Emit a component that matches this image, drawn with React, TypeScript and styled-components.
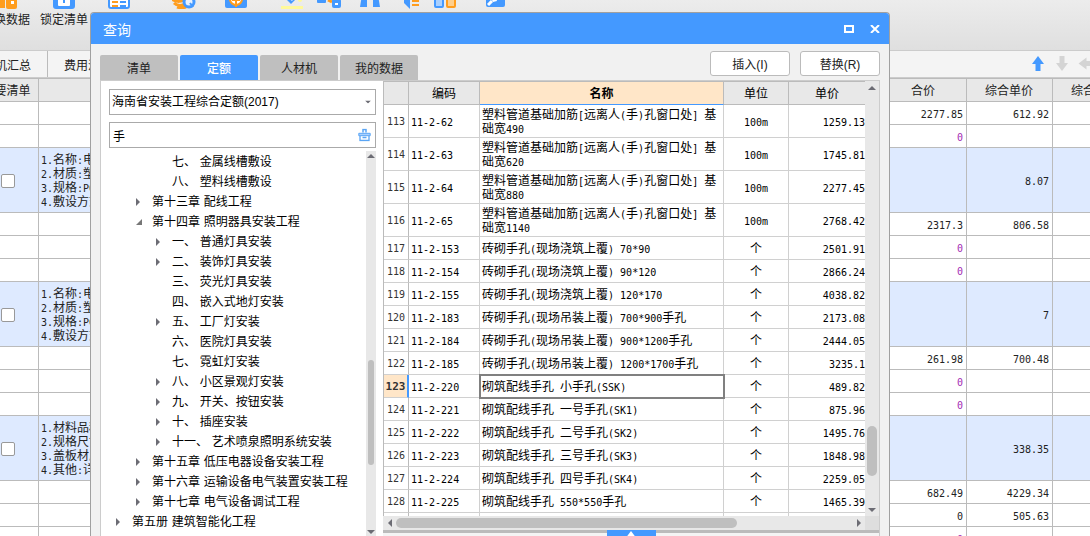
import React from "react";
import styled, { createGlobalStyle, css } from "styled-components";

const blue = "#4499ff";
const orange = "#ff9d1e";
const ui = `"Liberation Sans", "Noto Sans CJK SC", sans-serif`;
const cjk = `"Noto Sans CJK SC", sans-serif`;

const GlobalStyle = createGlobalStyle`
  *, *::before, *::after { box-sizing: border-box; }
  body { margin: 0; font-family: ${ui}; font-size: 12px; color: #222; overflow: hidden; }
  button, input, select { font: inherit; color: inherit; margin: 0; }
  svg { display: block; flex: none; }
`;

const Page = styled.div`
  position: relative;
  height: 100vh;
  overflow: hidden;
  background: #fff;
`;

/* ---------- main window ---------- */

const Ribbon = styled.div`
  height: 50px;
  overflow: hidden;
  background: linear-gradient(#ececec, #dfdfdf);
`;

const RibbonRow = styled.div`
  display: flex;
  margin: -15px 0 0 -18px;
`;

const RibbonButton = styled.button<{ $gap?: number }>`
  display: flex;
  flex: none;
  flex-direction: column;
  align-items: center;
  gap: 2px;
  padding: 0;
  margin-left: ${(p) => p.$gap ?? 0}px;
  border: 0;
  background: none;
  line-height: 18px;
  white-space: nowrap;
`;

const StripBar = styled.div`
  display: flex;
  justify-content: space-between;
  height: 28px;
  overflow: hidden;
  border-top: 1px solid #ccc;
  border-bottom: 1px solid #ccc;
  background: #f4f4f4;
`;

const StripTabs = styled.div`
  display: flex;
  margin-left: -45px;
`;

const StripTab = styled.button`
  padding: 0 16px;
  border: 0;
  border-right: 1px solid #bbb;
  background: none;
  white-space: nowrap;
`;

const StripTools = styled.div`
  display: flex;
  align-items: center;
  gap: 12px;
  margin-right: -2px;
`;

const IconButton = styled.button`
  display: flex;
  padding: 0;
  border: 0;
  background: none;
`;

const SheetWrap = styled.div`
  overflow: hidden;
`;

const Sheet = styled.table`
  width: calc(100% + 73px);
  margin-left: -24px;
  table-layout: fixed;
  border-collapse: separate;
  border-spacing: 0;
  border-top: 1px solid #bbb;
  font-family: ${cjk};
  line-height: 14px;

  th, td {
    height: 23px;
    padding: 0 3px 0 2px;
    border-right: 1px solid #bbb;
    border-bottom: 1px solid #bbb;
    overflow: hidden;
    font-weight: 400;
    white-space: nowrap;
  }
  th { background: #e8e8e8; text-align: center; }
`;

const SheetRow = styled.tr<{ $item?: boolean }>`
  ${(p) => p.$item && css`
    background: #deeaff;
    td { height: 65px; }
  `}
`;

const Num = styled.td<{ $zero?: boolean }>`
  text-align: right;
  color: ${(p) => (p.$zero ? "#a22bb3" : "inherit")};
`;

const CheckCell = styled.td`
  && { padding: 0 1px 0 3px; }
  text-align: center;
`;

const Check = styled.input`
  display: inline-block;
  width: 14px;
  height: 14px;
  appearance: none;
  border: 1px solid #999;
  border-radius: 2px;
  background: #fff;
  vertical-align: middle;
`;

const Latin = styled.span`
  font-family: "DejaVu Sans Mono", monospace;
  font-size: 10px;
  line-height: 0;
`;

/* ---------- query window ---------- */

const Dialog = styled.section`
  position: absolute;
  top: 12px;
  right: 200px;
  bottom: 0;
  left: 90px;
  display: flex;
  flex-direction: column;
  overflow: hidden;
  border: 1px solid #a0a0a0;
  border-bottom: 0;
  border-radius: 4px 4px 0 0;
  background: #f1f1f1;
`;

const TitleBar = styled.header`
  display: flex;
  flex: none;
  align-items: center;
  justify-content: space-between;
  height: 31px;
  padding: 0 9px 0 12px;
  background: ${blue};
  color: #fff;
`;

const Title = styled.h1`
  margin: 2px 0 0;
  font-size: 14px;
  font-weight: 400;
  line-height: 20px;
`;

const WindowButtons = styled.div`
  display: flex;
  gap: 16px;
`;

const Toolbar = styled.div`
  display: flex;
  flex: none;
  align-items: flex-end;
  justify-content: space-between;
  height: 36px;
  padding: 0 9px;
`;

const Tabs = styled.div`
  display: flex;
  gap: 2px;
`;

const Tab = styled.button<{ $active?: boolean }>`
  width: 78px;
  height: 25px;
  padding: 0;
  border: 0;
  border-radius: 2px 2px 0 0;
  background: ${(p) => (p.$active ? blue : "#bfbfbf")};
  color: ${(p) => (p.$active ? "#fff" : "#222")};
  font-weight: ${(p) => (p.$active ? 500 : 400)};
`;

const Actions = styled.div`
  display: flex;
  gap: 10px;
  padding-bottom: 4px;
`;

const Action = styled.button`
  width: 80px;
  height: 25px;
  padding: 0;
  border: 1px solid #bbb;
  border-radius: 3px;
  background: #fff;
`;

const Panel = styled.div`
  display: flex;
  flex: 1;
  min-height: 0;
  margin: 0 9px;
  border: 1px solid #ccc;
  border-bottom: 0;
  background: #fff;
`;

const Side = styled.div`
  display: flex;
  flex: none;
  flex-direction: column;
  width: 282px;
  padding: 8px 7px 0 8px;
`;

const Field = styled.div`
  position: relative;
  flex: none;
  height: 26px;
  margin-bottom: 7px;

  > svg {
    position: absolute;
    top: 50%;
    right: 5px;
    transform: translateY(-50%);
    pointer-events: none;
  }
`;

const fieldBox = css`
  width: 100%;
  height: 26px;
  padding: 0 20px 0 3px;
  appearance: none;
  border: 1px solid #aaa;
  border-radius: 0;
  outline: 0;
  background: #fff;
  color: #000;
`;

const Library = styled.select`
  ${fieldBox}
  padding-left: 2px;
`;

const Search = styled.input`
  ${fieldBox}
`;

const TreeArea = styled.div`
  display: flex;
  flex: 1;
  min-height: 0;
  margin-top: -4px;
`;

const Tree = styled.ul`
  flex: 1;
  min-width: 0;
  margin: 0;
  padding: 1px 0 0;
  overflow: hidden;
  list-style: none;
  font-family: "DejaVu Sans", "Noto Sans CJK SC", sans-serif;
  color: #000;
`;

const Node = styled.li<{ $level: number }>`
  display: flex;
  align-items: center;
  height: 20px;
  padding-left: ${(p) => p.$level * 20 - 13}px;
  line-height: 20px;
  white-space: pre;
`;

const Twisty = styled.span`
  display: flex;
  flex: none;
  width: 16px;
`;

const VBar = styled.div<{ $wide?: boolean }>`
  display: flex;
  flex: none;
  flex-direction: column;
  align-items: center;
  width: ${(p) => (p.$wide ? 14 : 10)}px;
  padding: ${(p) => (p.$wide ? "5px 0 4px" : "3px 0 2px")};
  background: #e8e8e8;
`;

const Space = styled.span<{ $grow: number }>`
  flex: ${(p) => p.$grow} 0 0;
`;

const Thumb = styled.span<{ $grow: number; $wide?: boolean }>`
  flex: ${(p) => p.$grow} 0 0;
  width: ${(p) => (p.$wide ? 10 : 6)}px;
  border-radius: 5px;
  background: #bfbfbf;
`;

const Results = styled.div`
  display: flex;
  flex: 1;
  flex-direction: column;
  min-width: 0;
  background: #f4f4f4;
`;

const GridArea = styled.div`
  display: flex;
  flex: none;
`;

const GridClip = styled.div`
  flex: 1;
  min-width: 0;
  border-top: 1px solid #bbb;
  border-left: 1px solid #bbb;
`;

const Grid = styled.table`
  width: 100%;
  table-layout: fixed;
  border-collapse: separate;
  border-spacing: 0;
  background: #fff;
  font-family: ${cjk};
  line-height: 14px;
  color: #000;

  th, td {
    height: 23px;
    padding: 0 2px;
    border-right: 1px solid #d0d0d0;
    border-bottom: 1px solid #d0d0d0;
    font-weight: 400;
    text-align: left;
  }
  th:last-child, td:last-child { padding: 0; border-right: 0; }
`;

const HeadCell = styled.th<{ $active?: boolean }>`
  && {
    border-right-color: #bbb;
    border-bottom-color: ${(p) => (p.$active ? blue : "#bbb")};
    background: ${(p) => (p.$active ? "#ffe6c8" : "#e8e8e8")};
    font-weight: ${(p) => (p.$active ? 700 : 400)};
    text-align: center;
  }
`;

const RowHead = styled.th<{ $active?: boolean }>`
  && {
    padding: 0 0 2px;
    border-right: ${(p) => (p.$active ? `2px solid ${blue}` : "1px solid #bbb")};
    background: ${(p) => (p.$active ? "#ffe6c8" : "#fff")};
    color: #333;
    text-align: center;
  }
  ${(p) => p.$active && css`
    ${Latin} { font-size: 11px; font-weight: 700; }
  `}
`;

const Row = styled.tr<{ $tall?: boolean; $rest?: boolean }>`
  && > * {
    ${(p) => p.$tall && "height: 33px;"}
    ${(p) => p.$rest && "height: 3px; border-bottom: 0;"}
  }
`;

const Cell = styled.td<{ $align?: string; $selected?: boolean }>`
  && {
    text-align: ${(p) => p.$align ?? "left"};
    ${(p) => p.$selected && "outline: 2px solid #808080; outline-offset: -1px;"}
  }
`;

const HBarRow = styled.div`
  display: flex;
  flex: none;
  height: 14px;
  background: #dedede;
`;

const HBar = styled.div`
  display: flex;
  flex: 1;
  align-items: center;
  margin-right: 14px;
  padding: 0 4px 0 5px;
  background: #e8e8e8;
`;

const HThumb = styled.span`
  flex: 340 0 0;
  height: 10px;
  margin-left: 4px;
  border-radius: 5px;
  background: #bfbfbf;
`;

const Splitter = styled.div`
  display: flex;
  flex: none;
  justify-content: center;
  border-top: 3px solid #bbb;
`;

const SplitHandle = styled.button`
  display: flex;
  justify-content: center;
  width: 49px;
  height: 12px;
  margin-top: -3px;
  padding: 1px 0 0;
  border: 0;
  background: ${blue};
`;

/* ---------- drawings ---------- */

const Triangle = ({ dir, size = "l" }: { dir: "up" | "down" | "left" | "right"; size?: "s" | "l" }) => {
  const long = size === "l" ? 8 : 6;
  const short = size === "l" ? 4 : 3;
  const flat = dir === "up" || dir === "down";
  const w = flat ? long : short;
  const h = flat ? short : long;
  const points = {
    up: `0,${h} ${w / 2},0 ${w},${h}`,
    down: `0,0 ${w},0 ${w / 2},${h}`,
    left: `${w},0 ${w},${h} 0,${h / 2}`,
    right: `0,0 ${w},${h / 2} 0,${h}`,
  }[dir];
  return (
    <svg width={w} height={h} viewBox={`0 0 ${w} ${h}`} fill="#6c6c74">
      <polygon points={points} />
    </svg>
  );
};

const OpenTriangle = () => (
  <svg width="7" height="7" viewBox="0 0 7 7" fill="#777">
    <path d="M6 0v6H0z" />
  </svg>
);

const Arrow = ({ turn, color }: { turn: number; color: string }) => (
  <svg width="12" height="16" viewBox="0 0 12 16" overflow="visible">
    <path d="M6 0l6 8H8.500v7h-5V8H0z" fill={color} transform={`rotate(${turn} 6 7.500)`} />
  </svg>
);

const Brush = () => (
  <svg width="13" height="13" viewBox="0 0 13 13" fill="none" stroke="#5aa5f5">
    <path d="M5 4V1h3v3" strokeWidth="1.500" />
    <path d="M.8 4.800h11.400v2.400H.8z" fill="#a8d0ff" />
    <path d="M2 7.500v4.500h9V7.500M4.500 9h4" strokeWidth="1.300" />
  </svg>
);

const icons: Record<string, React.ReactNode> = {
  swap: (
    <>
      <rect x="-2" y="4" width="11" height="19" rx="2" fill={blue} />
      <rect x="6" y="14" width="5" height="9" fill={orange} />
      <rect x="12" y="4" width="11" height="20" rx="2" fill={orange} />
      <rect x="17" y="16" width="3" height="3" fill="#fff" />
    </>
  ),
  lock: (
    <>
      <rect x="1" y="5" width="22" height="19" rx="3" fill={blue} />
      <rect x="6" y="8" width="12" height="13" rx="1" fill="#fff" />
      <rect x="11" y="14" width="2" height="4" fill={blue} />
    </>
  ),
  list: (
    <>
      <rect x="2" y="4" width="20" height="19" rx="2" fill="#fff" stroke={blue} strokeWidth="2" />
      <path d="M5 17h6M5 21h6" stroke={orange} strokeWidth="2" />
      <path d="M13 17h6M13 21h6" stroke={blue} strokeWidth="2" />
    </>
  ),
  coins: (
    <>
      <path d="M0 14c3 3 8 3 12 1M2 18c3 3 8 3 11 1M5 22c3 1 6 1 9 0" fill="none" stroke={orange} strokeWidth="3" />
      <circle cx="17" cy="17" r="5" fill="#e8f2ff" stroke={blue} strokeWidth="3" />
      <path d="M18 18l3 4" stroke={blue} strokeWidth="2" />
    </>
  ),
  tree: (
    <>
      <rect x="1" y="4" width="22" height="19" rx="2" fill={blue} />
      <circle cx="12" cy="14" r="6" fill="#fff" stroke={orange} strokeWidth="2" />
      <path d="M12 9v13M8 15h8" stroke={orange} strokeWidth="2" />
    </>
  ),
  fill: (
    <>
      <path d="M4 12l7 7 7-7z" fill={blue} />
      <path d="M9 13h5l-2 3z" fill="#fff" />
      <rect x="1" y="21" width="22" height="3" fill="#fff99a" />
      <circle cx="20" cy="15" r="2" fill="#fff99a" />
    </>
  ),
  link: (
    <>
      <rect x="0" y="11" width="9" height="7" rx="1" fill={blue} />
      <path d="M11 15l4 2" stroke={orange} strokeWidth="3" />
      <rect x="15" y="14" width="9" height="9" rx="2" fill={blue} />
      <rect x="18" y="18" width="3" height="2" fill="#fff" />
    </>
  ),
  find: (
    <path d="M2 22l2-12h5v6h6v-6h5l2 12h-7v-6h-6v6z" fill={blue} />
  ),
  sort: (
    <>
      <path d="M4 8h6v16l-6-6z" fill={blue} />
      <path d="M12 12h7M12 16h7M12 20h7" stroke={orange} strokeWidth="2" />
    </>
  ),
  columns: (
    <>
      <rect x="2" y="8" width="8" height="14" rx="1" fill="#a9d0ff" stroke={blue} strokeWidth="2" />
      <rect x="14" y="8" width="8" height="14" rx="1" fill="#ffcf8c" stroke={orange} strokeWidth="2" />
    </>
  ),
  tool: (
    <>
      <rect x="3" y="4" width="19" height="18" rx="2" fill={blue} />
      <path d="M5 20l4-4" stroke="#fff" strokeWidth="3" />
      <path d="M8 13h5l1 3-4 1z" fill="#fff" />
    </>
  ),
};

const RibbonIcon = ({ name }: { name: string }) => (
  <svg width="24" height="24" viewBox="0 0 24 24">{icons[name]}</svg>
);

/* ---------- data ---------- */

const tools = [
  { icon: "list", gap: 19 },
  { icon: "coins", gap: 41 },
  { icon: "tree", gap: 28 },
  { icon: "fill", gap: 32 },
  { icon: "link", gap: 13 },
  { icon: "find", gap: 17 },
  { icon: "sort", gap: 18 },
  { icon: "columns", gap: 9 },
  { icon: "tool", gap: 26 },
];

const pipe = ["1.名称:电气配管", "2.材质:塑料", "3.规格:PC", "4.敷设方式"];
const cover = ["1.材料品种", "2.规格尺寸", "3.盖板材质", "4.其他:详见"];

type SheetItem = { total?: string; unit?: string; notes?: string[]; zero?: boolean };
const sheet: SheetItem[] = [
  { total: "2277.85", unit: "612.92" },
  { total: "0", zero: true },
  { unit: "8.07", notes: pipe },
  { total: "2317.3", unit: "806.58" },
  { total: "0", zero: true },
  { total: "0", zero: true },
  { unit: "7", notes: pipe },
  { total: "261.98", unit: "700.48" },
  { total: "0", zero: true },
  { total: "0", zero: true },
  { unit: "338.35", notes: cover },
  { total: "682.49", unit: "4229.34" },
  { total: "0", unit: "505.63" },
  { total: "0", zero: true },
];

type TreeItem = [level: number, label: string, state?: "open" | "closed"];
const tree: TreeItem[] = [
  [3, "七、 金属线槽敷设"],
  [3, "八、 塑料线槽敷设"],
  [2, "第十三章 配线工程", "closed"],
  [2, "第十四章 照明器具安装工程", "open"],
  [3, "一、 普通灯具安装", "closed"],
  [3, "二、 装饰灯具安装", "closed"],
  [3, "三、 荧光灯具安装"],
  [3, "四、 嵌入式地灯安装"],
  [3, "五、 工厂灯安装", "closed"],
  [3, "六、 医院灯具安装"],
  [3, "七、 霓虹灯安装"],
  [3, "八、 小区景观灯安装", "closed"],
  [3, "九、 开关、按钮安装", "closed"],
  [3, "十、 插座安装", "closed"],
  [3, "十一、 艺术喷泉照明系统安装", "closed"],
  [2, "第十五章 低压电器设备安装工程", "closed"],
  [2, "第十六章 运输设备电气装置安装工程", "closed"],
  [2, "第十七章 电气设备调试工程", "closed"],
  [1, "第五册 建筑智能化工程", "closed"],
];

const quotas: [string, string, string, string, string][] = [
  ["113", "11-2-62", "塑料管道基础加筋[远离人(手)孔窗口处] 基础宽490", "100m", "1259.13"],
  ["114", "11-2-63", "塑料管道基础加筋[远离人(手)孔窗口处] 基础宽620", "100m", "1745.81"],
  ["115", "11-2-64", "塑料管道基础加筋[远离人(手)孔窗口处] 基础宽880", "100m", "2277.45"],
  ["116", "11-2-65", "塑料管道基础加筋[远离人(手)孔窗口处] 基础宽1140", "100m", "2768.42"],
  ["117", "11-2-153", "砖砌手孔(现场浇筑上覆) 70*90", "个", "2501.91"],
  ["118", "11-2-154", "砖砌手孔(现场浇筑上覆) 90*120", "个", "2866.24"],
  ["119", "11-2-155", "砖砌手孔(现场浇筑上覆) 120*170", "个", "4038.82"],
  ["120", "11-2-183", "砖砌手孔(现场吊装上覆) 700*900手孔", "个", "2173.08"],
  ["121", "11-2-184", "砖砌手孔(现场吊装上覆) 900*1200手孔", "个", "2444.05"],
  ["122", "11-2-185", "砖砌手孔(现场吊装上覆) 1200*1700手孔", "个", "3235.1"],
  ["123", "11-2-220", "砌筑配线手孔 小手孔(SSK)", "个", "489.82"],
  ["124", "11-2-221", "砌筑配线手孔 一号手孔(SK1)", "个", "875.96"],
  ["125", "11-2-222", "砌筑配线手孔 二号手孔(SK2)", "个", "1495.76"],
  ["126", "11-2-223", "砌筑配线手孔 三号手孔(SK3)", "个", "1848.98"],
  ["127", "11-2-224", "砌筑配线手孔 四号手孔(SK4)", "个", "2259.05"],
  ["128", "11-2-225", "砌筑配线手孔 550*550手孔", "个", "1465.39"],
];
const current = "123";

/* Sets runs of Latin characters on the half-width grid of the CJK text. */
const Mixed = ({ text }: { text: string }) => (
  <>
    {text.split(/([\x20-\x7e]+)/).filter(Boolean).map((run, i) =>
      /^[\x20-\x7e]/.test(run) ? <Latin key={i}>{run}</Latin> : run
    )}
  </>
);

const MainWindow = () => (
  <>
    <Ribbon>
      <RibbonRow>
        <RibbonButton><RibbonIcon name="swap" />替换数据</RibbonButton>
        <RibbonButton $gap={10}><RibbonIcon name="lock" />锁定清单</RibbonButton>
        {tools.map((t) => (
          <RibbonButton key={t.icon} $gap={t.gap} aria-label={t.icon}>
            <RibbonIcon name={t.icon} />
          </RibbonButton>
        ))}
      </RibbonRow>
    </Ribbon>
    <StripBar>
      <StripTabs>
        <StripTab>人材机汇总</StripTab>
        <StripTab>费用汇总</StripTab>
      </StripTabs>
      <StripTools>
        <IconButton aria-label="上移"><Arrow turn={0} color={blue} /></IconButton>
        <IconButton aria-label="下移"><Arrow turn={180} color="#d4d4d4" /></IconButton>
        <IconButton aria-label="左移"><Arrow turn={270} color="#d4d4d4" /></IconButton>
      </StripTools>
    </StripBar>
    <SheetWrap>
      <Sheet>
        <colgroup>
          <col style={{ width: 63 }} />
          <col />
          <col style={{ width: 86 }} />
          <col style={{ width: 86 }} />
          <col style={{ width: 86 }} />
        </colgroup>
        <thead>
          <tr>
            <th>主要清单</th>
            <th />
            <th>合价</th>
            <th>综合单价</th>
            <th>综合合价</th>
          </tr>
        </thead>
        <tbody>
          {sheet.map((r, i) => (
            <SheetRow key={i} $item={!!r.notes}>
              <CheckCell>{r.notes && <Check type="checkbox" aria-label="主要清单" />}</CheckCell>
              <td>{r.notes?.map((n) => <div key={n}><Mixed text={n} /></div>)}</td>
              <Num $zero={r.zero}><Mixed text={r.total ?? ""} /></Num>
              <Num><Mixed text={r.unit ?? ""} /></Num>
              <Num />
            </SheetRow>
          ))}
        </tbody>
      </Sheet>
    </SheetWrap>
  </>
);

const QuotaTree = () => (
  <TreeArea>
    <Tree>
      {tree.map(([level, label, state]) => (
        <Node key={label} $level={level}>
          <Twisty>
            {state === "closed" && <Triangle dir="right" />}
            {state === "open" && <OpenTriangle />}
          </Twisty>
          {label}
        </Node>
      ))}
    </Tree>
    <VBar>
      <Triangle dir="up" />
      <Space $grow={203} />
      <Thumb $grow={105} />
      <Space $grow={65} />
      <Triangle dir="down" />
    </VBar>
  </TreeArea>
);

const QuotaGrid = () => (
  <Results>
    <GridArea>
      <GridClip>
        <Grid>
          <colgroup>
            <col style={{ width: 25 }} />
            <col style={{ width: 71 }} />
            <col />
            <col style={{ width: 65 }} />
            <col style={{ width: 76 }} />
          </colgroup>
          <thead>
            <tr>
              <HeadCell />
              <HeadCell>编码</HeadCell>
              <HeadCell $active>名称</HeadCell>
              <HeadCell>单位</HeadCell>
              <HeadCell>单价</HeadCell>
            </tr>
          </thead>
          <tbody>
            {quotas.map(([no, code, name, unit, price], i) => (
              <Row key={no} $tall={i < 4}>
                <RowHead scope="row" $active={no === current}><Mixed text={no} /></RowHead>
                <Cell><Mixed text={code} /></Cell>
                <Cell $selected={no === current}><Mixed text={name} /></Cell>
                <Cell $align="center"><Mixed text={unit} /></Cell>
                <Cell $align="right"><Mixed text={price} /></Cell>
              </Row>
            ))}
            <Row $rest>
              <RowHead /><Cell /><Cell /><Cell /><Cell />
            </Row>
          </tbody>
        </Grid>
      </GridClip>
      <VBar $wide>
        <Triangle dir="up" />
        <Space $grow={335} />
        <Thumb $wide $grow={50} />
        <Space $grow={32} />
        <Triangle dir="down" />
      </VBar>
    </GridArea>
    <HBarRow>
      <HBar>
        <Triangle dir="left" />
        <HThumb />
        <Space $grow={119} />
        <Triangle dir="right" />
      </HBar>
    </HBarRow>
    <Splitter>
      <SplitHandle aria-label="展开">
        <svg width="12" height="8" viewBox="0 0 12 8" fill="#fff"><path d="M6 0l6 8H0z" /></svg>
      </SplitHandle>
    </Splitter>
  </Results>
);

export default function App() {
  return (
    <Page>
      <GlobalStyle />
      <MainWindow />
      <Dialog role="dialog" aria-label="查询">
        <TitleBar>
          <Title>查询</Title>
          <WindowButtons>
            <IconButton aria-label="最大化">
              <svg width="10" height="8" viewBox="0 0 10 8" fill="none" stroke="#fff" strokeWidth="2">
                <path d="M1 1h8v6H1z" />
              </svg>
            </IconButton>
            <IconButton aria-label="关闭">
              <svg width="10" height="8" viewBox="0 0 10 8" stroke="#fff" strokeWidth="2">
                <path d="M1 0l8 8M9 0L1 8" />
              </svg>
            </IconButton>
          </WindowButtons>
        </TitleBar>
        <Toolbar>
          <Tabs role="tablist">
            <Tab role="tab">清单</Tab>
            <Tab role="tab" $active aria-selected>定额</Tab>
            <Tab role="tab">人材机</Tab>
            <Tab role="tab">我的数据</Tab>
          </Tabs>
          <Actions>
            <Action>插入(I)</Action>
            <Action>替换(R)</Action>
          </Actions>
        </Toolbar>
        <Panel>
          <Side>
            <Field>
              <Library aria-label="定额库">
                <option>海南省安装工程综合定额(2017)</option>
              </Library>
              <Triangle dir="down" size="s" />
            </Field>
            <Field>
              <Search aria-label="查询条件" defaultValue="手" />
              <Brush />
            </Field>
            <QuotaTree />
          </Side>
          <QuotaGrid />
        </Panel>
      </Dialog>
    </Page>
  );
}
